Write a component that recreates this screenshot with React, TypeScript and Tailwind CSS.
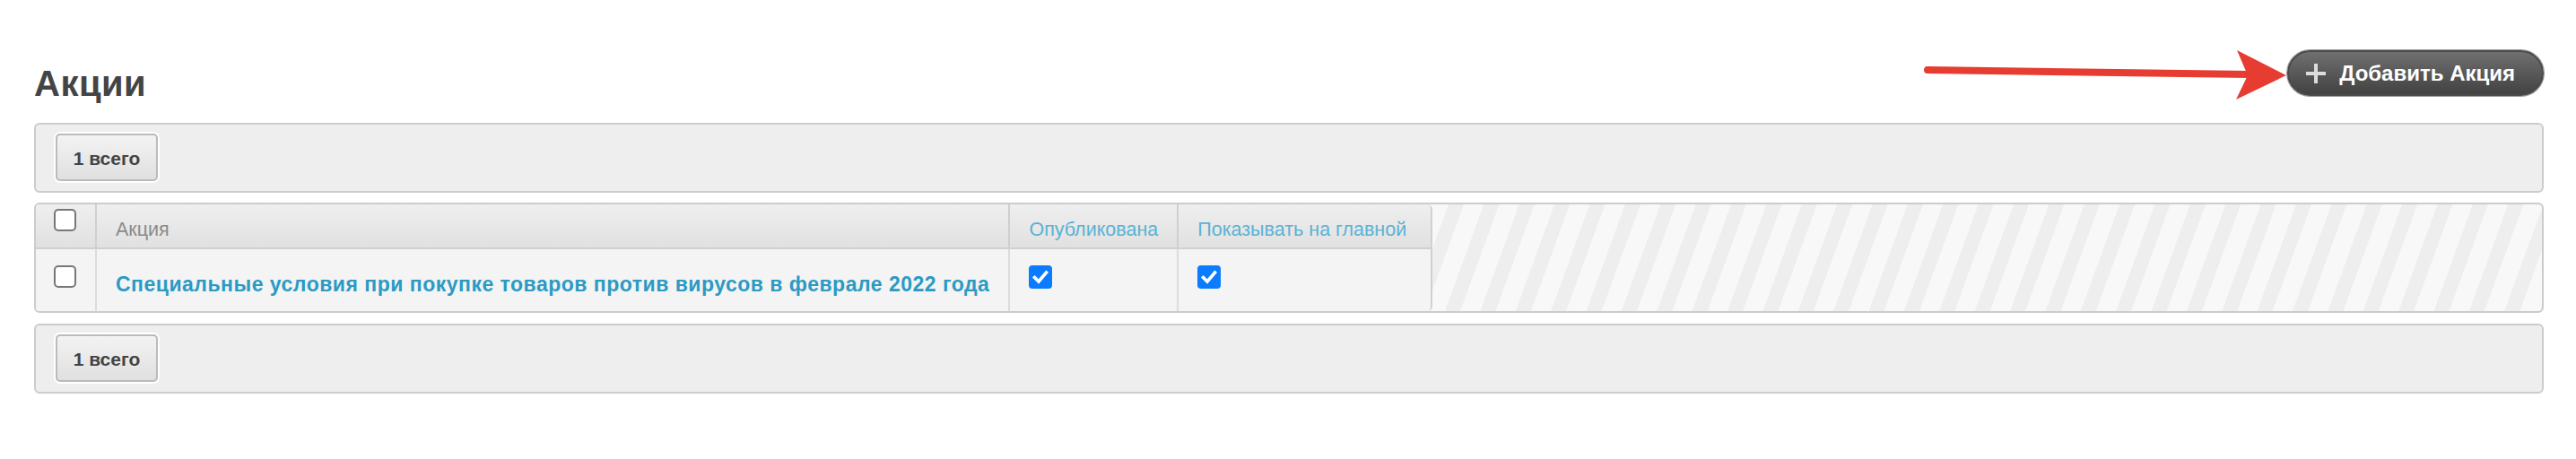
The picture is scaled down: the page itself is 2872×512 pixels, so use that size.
import React from "react";

const font = { fontFamily: '"Liberation Sans", Arial, sans-serif' };

const Unchecked = () => (
  <span className="block w-[25px] h-[25px] rounded-[5px] border-2 border-[#777] bg-white" />
);

const Checked = () => (
  <span className="flex w-[26px] h-[26px] items-center justify-center rounded-[4px] bg-[#0b7cff]">
    <svg width="26" height="26" viewBox="0 0 26 26" fill="none">
      <path d="M6.5 13.5l4.5 4.5 8.5-10" stroke="#fff" strokeWidth="3.6" strokeLinecap="square" />
    </svg>
  </span>
);

const CountBar = () => (
  <div className="rounded-[6px] border-2 border-[#cccccc] bg-[#eeeeee] px-[22px] pt-[10px] pb-[11px]">
    <button className="flex h-[53px] w-[114px] items-center justify-center rounded-[5px] border-2 border-[#bbbbbb] bg-gradient-to-b from-[#f3f3f3] to-[#e0e0e0] pt-[2px] text-[21px] font-bold text-[#444] shadow-[0_0_0_2px_#ffffff]">
      1 всего
    </button>
  </div>
);

export default function App() {
  return (
    <div className="relative min-h-[512px] bg-white pl-[38px] pr-[36px]" style={font}>
      {/* annotation arrow */}
      <svg
        className="absolute left-[2140px] top-[50px]"
        width="420"
        height="70"
        viewBox="0 0 420 70"
      >
        <path d="M9 28 L368 33" stroke="#e63c31" strokeWidth="8" strokeLinecap="round" />
        <polygon points="409,34 354,6 366,34 353,61" fill="#e63c31" />
      </svg>

      <div className="flex items-start justify-between pt-[56px]">
        <h1 className="mt-[17px] text-[40px] font-bold leading-none tracking-[0.5px] text-[#444]">Акции</h1>
        <button className="flex h-[51px] items-center gap-[14px] rounded-full border-2 border-[#4a4a4a] bg-gradient-to-b from-[#707070] to-[#424242] pl-[18px] pr-[30px] text-[24px] font-bold text-white shadow-[0_0_0_1px_#9a9a9a]">
          <svg width="24" height="24" viewBox="0 0 24 24">
            <path d="M12 1v22M1 12h22" stroke="#dcdcdc" strokeWidth="4" />
          </svg>
          Добавить Акция
        </button>
      </div>

      <div className="mt-[24px]">
        <CountBar />
      </div>

      <div className="mt-[11px] overflow-hidden rounded-[6px] border-2 border-[#cccccc] bg-[repeating-linear-gradient(110deg,#eeeeee_0px,#eeeeee_16px,#f8f8f8_16px,#f8f8f8_37px)]">
        <div className="w-max overflow-hidden rounded-r-[6px] border-r-2 border-[#d0d0d0]">
          <table className="border-separate border-spacing-0">
            <thead>
              <tr className="h-[50px] bg-gradient-to-b from-[#efefef] to-[#e0e0e0]">
                <th className="w-[68px] border-r-2 border-b-2 border-[#cfcfcf] p-0 pt-[5px] align-top">
                  <div className="flex justify-center pr-[1px]">
                    <Unchecked />
                  </div>
                </th>
                <th className="border-r-2 border-b-2 border-[#cfcfcf] px-[21px] pt-[12px] text-left align-top text-[21.5px] font-normal text-[#8a8a8a]">
                  Акция
                </th>
                <th className="border-r-2 border-b-2 border-[#cfcfcf] px-[21px] pt-[12px] text-left align-top text-[21.5px] font-normal text-[#5ab3d5]">
                  Опубликована
                </th>
                <th className="border-b-2 border-[#cfcfcf] pl-[21px] pr-[27px] pt-[12px] text-left align-top text-[21.5px] font-normal text-[#5ab3d5]">
                  Показывать на главной
                </th>
              </tr>
            </thead>
            <tbody>
              <tr className="h-[69px] bg-[#f4f4f4]">
                <td className="border-r-2 border-[#dcdcdc] p-0 pt-[18px] align-top">
                  <div className="flex justify-center pr-[1px]">
                    <Unchecked />
                  </div>
                </td>
                <td className="border-r-2 border-[#dcdcdc] px-[21px] pt-[22px] align-top text-[23px] font-bold tracking-[0.5px] text-[#2b9ac4]">
                  Специальные условия при покупке товаров против вирусов в феврале 2022 года
                </td>
                <td className="border-r-2 border-[#dcdcdc] px-[21px] pt-[18px] align-top">
                  <Checked />
                </td>
                <td className="pl-[21px] pr-[27px] pt-[18px] align-top">
                  <Checked />
                </td>
              </tr>
            </tbody>
          </table>
        </div>
      </div>

      <div className="mt-[12px]">
        <CountBar />
      </div>
    </div>
  );
}
